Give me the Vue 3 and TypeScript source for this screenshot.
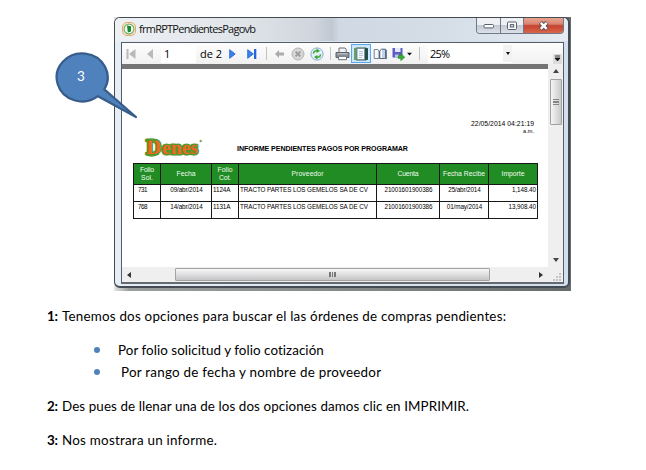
<script setup lang="ts">
import type { Directive } from 'vue'

// Spreads the letters of a label so that it fills the given width in pixels.
const vFit: Directive<HTMLElement, number> = {
  mounted(el, { value }) {
    const count = (el.textContent ?? '').length
    const natural = el.getBoundingClientRect().width
    if (count > 1 && natural > 0) {
      const step = (value - natural) / (count - 1)
      el.style.letterSpacing = `${step}px`
      el.style.marginRight = `${-step}px`
    }
  },
}

interface Cell { text: string; width: number }

const headers: { lines: Cell[] }[] = [
  { lines: [{ text: 'Folio', width: 14 }, { text: 'Sol.', width: 12 }] },
  { lines: [{ text: 'Fecha', width: 19 }] },
  { lines: [{ text: 'Folio', width: 15 }, { text: 'Cot.', width: 12 }] },
  { lines: [{ text: 'Proveedor', width: 32 }] },
  { lines: [{ text: 'Cuenta', width: 21 }] },
  { lines: [{ text: 'Fecha Recibe', width: 42 }] },
  { lines: [{ text: 'Importe', width: 23 }] },
]

const rows: Cell[][] = [
  [
    { text: '731', width: 9.5 },
    { text: '09/abr/2014', width: 32.5 },
    { text: '1124A', width: 17.5 },
    { text: 'TRACTO PARTES LOS GEMELOS SA DE CV', width: 128 },
    { text: '21001601900386', width: 48 },
    { text: '25/abr/2014', width: 32.5 },
    { text: '1,148.40', width: 24 },
  ],
  [
    { text: '768', width: 9.5 },
    { text: '14/abr/2014', width: 32.5 },
    { text: '1131A', width: 17.5 },
    { text: 'TRACTO PARTES LOS GEMELOS SA DE CV', width: 128 },
    { text: '21001601900386', width: 48 },
    { text: '01/may/2014', width: 35.5 },
    { text: '13,908.40', width: 27.5 },
  ],
]
</script>

<template>
  <main class="page">
    <section class="shot">
      <div class="window">
        <header class="title">
          <svg class="app-icon" width="14" height="14" viewBox="0 0 14 14">
            <rect x=".5" y=".5" width="13" height="13" rx="4.5" fill="#fbe6cf" stroke="#e6a873" />
            <circle cx="7" cy="7" r="4.9" fill="#fff" stroke="#6fb862" stroke-width="1.2" />
            <path d="M5 3.6 9 4.2v5.4l-3.2 1z" fill="#168b29" />
          </svg>
          <span class="caption"><span v-fit="117">frmRPTPendientesPagovb</span></span>
          <div class="controls">
            <span class="control min">
              <svg width="12" height="8" viewBox="0 0 12 8"><rect x="1" y="2.5" width="9.5" height="3.4" rx="1" fill="#fff" stroke="#59616d" /></svg>
            </span>
            <span class="control max">
              <svg width="12" height="10" viewBox="0 0 12 10"><rect x="1.5" y="1" width="9" height="7.5" rx="1" fill="#fff" stroke="#59616d" /><rect x="4.3" y="3.6" width="3.4" height="2.4" fill="#d9dde4" stroke="#59616d" /></svg>
            </span>
            <span class="control close">
              <svg width="12" height="10" viewBox="0 0 12 10"><path d="M2.5 1.5 9 8.2M9 1.5 2.5 8.2" stroke="#59494f" stroke-width="4.2" /><path d="M2.8 1.8 8.7 7.9M8.7 1.8 2.8 7.9" stroke="#fff" stroke-width="2.4" /></svg>
            </span>
          </div>
        </header>

        <div class="client">
          <div class="toolbar">
            <span class="tool first"><svg width="10" height="10" viewBox="0 0 10 10"><path d="M.5 0h2v10h-2zM9.5 0v10L3 5z" fill="#b7b9bb" /></svg></span>
            <span class="tool prev"><svg width="6" height="10" viewBox="0 0 6 10"><path d="M6 0v10L0 5z" fill="#b7b9bb" /></svg></span>
            <span class="page-box">1</span>
            <span class="page-total"><span v-fit="22">de 2</span></span>
            <span class="tool next"><svg width="7" height="10" viewBox="0 0 7 10"><path d="M.7.7v8.6L6.2 5z" fill="#3982ee" stroke="#1c5dce" stroke-width=".8" /></svg></span>
            <span class="tool last"><svg width="10" height="10" viewBox="0 0 10 10"><path d="M.7.7v8.6L6.4 5z" fill="#3982ee" stroke="#1c5dce" stroke-width=".8" /><path d="M7 0h2.3v10H7z" fill="#2367d5" /></svg></span>
            <span class="sep wide"></span>
            <span class="tool back"><svg width="9" height="8" viewBox="0 0 9 8"><path d="M0 4 4 0v2.6h5v3H4V8z" fill="#a9abad" /></svg></span>
            <span class="tool stop"><svg width="14" height="14" viewBox="0 0 14 14"><circle cx="7" cy="7" r="6" fill="#d6d6d6" stroke="#b4b4b4" /><path d="m4.6 4.6 4.8 4.8m0-4.8L4.6 9.4" stroke="#999" stroke-width="1.6" /></svg></span>
            <span class="tool refresh"><svg width="14" height="14" viewBox="0 0 14 14"><circle cx="7" cy="7" r="6.1" fill="#e6f0f8" stroke="#82aed3" /><path d="M3.4 6.6C3.6 4.6 5 3.6 7 3.7M10.6 7.4c-.2 2-1.6 3-3.6 2.9" fill="none" stroke="#45ad3f" stroke-width="1.5" /><path d="M6.6 1.6 10 3.9 6.6 6zM7.4 8 4 10.1l3.4 2.3z" fill="#32a62f" /></svg></span>
            <span class="sep"></span>
            <span class="tool print"><svg width="15" height="14" viewBox="0 0 15 14"><path d="M4 1h6l1.2 1.3V6H4z" fill="#eef2f7" stroke="#6c7178" /><path d="M1 5.5h13v5H1z" fill="#8d9298" stroke="#5c626a" /><path d="M2.5 6.8h10" stroke="#c6cbd1" /><path d="M3.5 9.3h8v3.4h-8z" fill="#fff" stroke="#6a7078" /></svg></span>
            <span class="tool layout"><svg width="16" height="14" viewBox="0 0 16 14"><path d="M1 1.5 4 .5h8l3 1v11l-3 1H4l-3-1z" fill="#326b35" /><path d="M1 1.5 3.5.6v12.7L1 12.5z" fill="#65a46b" /><path d="M12 .5 15 1.5v11l-3 1z" fill="#264e46" /><path d="M4 1.5h7.5v11H4z" fill="#f7fbff" stroke="#7e919f" /><path d="M6 4.5h4M6 6.5h4M6 8.5h4M6 10.5h3" stroke="#adc4dc" /></svg></span>
            <span class="tool setup"><svg width="15" height="12" viewBox="0 0 15 12"><path d="M1.2 1.5h3.6L6 3v7.5H1.2z" fill="#f6f8fa" stroke="#7b828c" /><path d="M6.5 10.5V3l2-1.8h4v9.3z" fill="#c3d2e6" stroke="#56667a" /><path d="M8.5 2v8" stroke="#fff" /><path d="M13.4 1.8v9.3" fill="none" stroke="#62738a" /></svg></span>
            <span class="tool save"><svg width="20" height="14" viewBox="0 0 20 14"><path d="M.5 1h10v9.5H.5z" fill="#5e5bc4" /><path d="M3 1h5.5v4H3z" fill="#e3e8fa" /><path d="M3 7.5h4v3H3z" fill="#c3c5ec" /><path d="M6.2 8.6h2.6V6.4l4 3.8-4 3.6v-2.4H6.200z" fill="#39ad34" stroke="#208528" stroke-width=".5" /><path d="M15 5.8h5l-2.5 2.7z" fill="#111" /></svg></span>
            <span class="sep zoom-sep"></span>
            <span class="zoom-box"><span v-fit="20">25%</span><i></i></span>
            <span class="overflow"><svg width="7" height="7" viewBox="0 0 7 7"><path d="M1 1h5M1 3h5L3.5 6z" fill="#111" stroke="#111" stroke-width=".8" /></svg></span>
          </div>

          <div class="viewer">
            <div class="report">
              <div class="stamp">
                <span v-fit="63">22/05/2014 04:21:19</span>
                <div class="meridiem"><span v-fit="11">a.m.</span></div>
              </div>
              <div class="heading">
                <svg class="logo" width="60" height="22" viewBox="0 0 60 22">
                  <g class="outline"><text x="2" y="17"><tspan class="cap">D</tspan><tspan x="18" textLength="36" lengthAdjust="spacingAndGlyphs">enes</tspan></text></g>
                  <path d="M2 17.500c4 2 9 1.500 13-.6M2 4.500c3-2.600 7-2 10-.6" fill="none" stroke="#51982b" stroke-width="1.500" />
                  <circle cx="56.7" cy="4" r="1.2" fill="#7faa54" />
                </svg>
                <h1><span v-fit="171">INFORME PENDIENTES PAGOS POR PROGRAMAR</span></h1>
              </div>
              <div class="table">
                <div v-for="(head, h) in headers" :key="'h' + h" class="th">
                  <div v-for="line in head.lines" :key="line.text"><span v-fit="line.width">{{ line.text }}</span></div>
                </div>
                <template v-for="(row, r) in rows" :key="r">
                  <div v-for="(cell, c) in row" :key="c" class="td" :class="'col-' + c">
                    <span v-fit="cell.width">{{ cell.text }}</span>
                  </div>
                </template>
              </div>
            </div>
            <div class="vbar">
              <svg class="arrow" width="6" height="4" viewBox="0 0 6 4"><path d="M0 4h6L3 0z" fill="#444" /></svg>
              <div class="vthumb"><i></i><i></i><i></i></div>
              <svg class="arrow down" width="6" height="4" viewBox="0 0 6 4"><path d="M0 0h6L3 4z" fill="#444" /></svg>
            </div>
          </div>

          <div class="hbar">
            <svg class="left" width="4" height="6" viewBox="0 0 4 6"><path d="M4 0v6L0 3z" fill="#333" /></svg>
            <div class="hthumb"><i></i><i></i><i></i></div>
            <svg class="right" width="4" height="6" viewBox="0 0 4 6"><path d="M0 0v6l4-3z" fill="#333" /></svg>
            <svg class="grip" width="8" height="8" viewBox="0 0 8 8"><path d="M6 0h2v2H6zM3 3h2v2H3zM6 3h2v2H6zM0 6h2v2H0zM3 6h2v2H3zM6 6h2v2H6z" fill="#c4c4c4" /></svg>
          </div>
        </div>
      </div>

      <div class="callout">
        <svg width="88" height="70" viewBox="0 0 88 70">
          <path d="M54.3 38.300 86 66 48 45.200A25.500 24 0 1 1 54.300 38.300Z" fill="#4f81bd" stroke="#385d8a" stroke-width="2.2" stroke-linejoin="round" />
        </svg>
        <span>3</span>
      </div>
    </section>

    <section class="notes">
      <p><b v-fit="11">1:</b><span v-fit="444">Tenemos dos opciones para buscar el las órdenes de compras pendientes:</span></p>
      <ul>
        <li><span v-fit="206">Por folio solicitud y folio cotización</span></li>
        <li class="shifted"><span v-fit="260">Por rango de fecha y nombre de proveedor</span></li>
      </ul>
      <p><b v-fit="11">2:</b><span v-fit="407">Des pues de llenar una de los dos opciones damos clic en IMPRIMIR.</span></p>
      <p><b v-fit="11">3:</b><span v-fit="155">Nos mostrara un informe.</span></p>
    </section>
  </main>
</template>

<style>
body { background: #fff; }
</style>

<style scoped>
* { box-sizing: border-box; }
.page { width: 646px; height: 470px; overflow: hidden; background: #fff; padding-top: 17px; color: #000; }
.page span, .page b { white-space: nowrap; }
.shot { position: relative; width: 457px; height: 274px; margin-left: 114px; background: linear-gradient(90deg, #e4e5e6, #9a9e9f 15px, #808586 60%, #666b6b); }
.window { width: 456px; height: 271px; border: 1px solid #444b52; border-right-width: 2px; border-bottom-width: 2px; border-radius: 6px; background: linear-gradient(90deg, #e7edf4, #d7e0eb 70%, #d3dfec); padding: 0 5px 6px 6px; }
.title { display: flex; height: 23px; margin: 0 -5px 0 -6px; padding: 0 4px 0 7px; border-radius: 5px 5px 0 0; background: linear-gradient(90deg, #eef1f4, #dfe4e9 130px, #d0d5dd 200px, #c0c8d3 217px, #d0d8e3 224px, #d5dde7 330px, #e4ebf2); }
.app-icon { margin-top: 4px; }
.caption { margin: 2px 0 0 3px; font: 11px/18px "Open Sans", sans-serif; color: #111; }
.controls { display: flex; margin-left: auto; height: 16px; border: 1px solid #707884; border-top: 0; border-radius: 0 0 4px 4px; overflow: hidden; }
.control { display: flex; align-items: center; justify-content: center; background: linear-gradient(#eef0f4 45%, #c3c9d3 50%, #dce1e9); border-right: 1px solid #707884; }
.min { width: 24px; }
.max { width: 23px; }
.close { width: 39px; border: 0; background: linear-gradient(#e9a48f 0, #d88571 40%, #c4432f 52%, #d9664a); }
.client { width: 443px; height: 242px; margin-top: 1px; border: 1px solid #555d67; border-bottom: 2px solid #656a72; background: #fff; }
.toolbar { display: flex; align-items: center; height: 21px; background: linear-gradient(#fdfdfd, #f1f1f1); }
.tool { display: flex; align-items: center; justify-content: center; height: 19px; flex: none; }
.first { width: 17px; }
.prev { width: 22px; }
.page-box { width: 35px; height: 18px; padding-left: 3px; background: #fff; font: 11px/17px "Open Sans", sans-serif; }
.page-total { width: 28px; padding-left: 4px; font: 11px/17px "Open Sans", sans-serif; }
.next { width: 17px; }
.last { width: 21px; }
.sep { width: 1px; height: 13px; margin: 0 3px; background: #c2c2c2; }
.sep.wide { margin: 0 4px; }
.back { width: 17px; }
.stop { width: 19px; }
.refresh { width: 20px; }
.print { width: 17px; }
.layout { width: 20px; border: 1px solid #55a9f2; background: #cfe6fc; }
.setup { width: 19px; }
.save { width: 23px; }
.zoom-sep { margin: 0 8px 0 6px; }
.zoom-box { display: flex; align-items: center; justify-content: space-between; width: 84px; height: 18px; padding-left: 2px; background: #fff; font: 11px/17px "Open Sans", sans-serif; }
.zoom-box i { width: 9px; height: 17px; background: #f2f2f2; display: flex; align-items: center; justify-content: center; }
.zoom-box i::after { content: ""; border: 2.5px solid transparent; border-top: 3px solid #111; border-bottom: 0; }
.overflow { display: flex; align-items: center; justify-content: center; width: 9px; height: 10px; margin: 10px 1px 0 auto; background: #dcdcdc; }
.viewer { display: flex; height: 203px; }
.report { width: 426px; border-top: 5px solid #747474; padding-left: 11px; font-family: "Liberation Sans", sans-serif; }
.stamp { width: 401px; height: 70px; padding-top: 50px; text-align: right; font-size: 6.8px; line-height: 9px; }
.meridiem { font-size: 5.5px; line-height: 6px; }
.heading { display: flex; height: 24px; }
.logo { margin-left: 11px; margin-top: -2px; overflow: visible; }
.logo text { font: bold 19px "Liberation Serif", serif; fill: #f26522; }
.logo .cap { font-size: 21px; }
.logo .outline { stroke: #52982d; stroke-width: 3px; paint-order: stroke; stroke-linejoin: round; }
h1 { margin: 5px 0 0 33px; font: bold 7.1px/10px "Liberation Sans", sans-serif; }
.table { display: grid; grid-template-columns: 26px 50px 26px 137px 62px 48px 48px; grid-template-rows: 20px 16px 16px; gap: 1px; width: 405px; padding: 1px; background: #171717; }
.th { display: flex; flex-direction: column; justify-content: center; text-align: center; background: #218c24; color: #f0faee; font-size: 6.8px; line-height: 8px; padding-bottom: 1px; }
.td { background: #fff; padding: 1px 2px 0 3px; font-size: 6.3px; line-height: 8px; text-align: center; }
.col-0 { text-align: left; padding-left: 4px; }
.col-2, .col-3 { text-align: left; padding-left: 1px; }
.col-6 { text-align: right; padding-right: 1px; }
.vbar { display: flex; flex-direction: column; align-items: center; width: 15px; padding: 5px 1px 5px; background: #efefef; }
.vthumb { display: flex; flex-direction: column; align-items: center; justify-content: center; gap: 1px; width: 12px; height: 46px; margin-top: 6px; border: 1px solid #a1a1a1; border-radius: 1px; background: linear-gradient(90deg, #f5f5f5, #dedfe0 50%, #c8c9cc); }
.vthumb i { width: 6px; height: 1.5px; background: #858585; }
.down { margin-top: auto; }
.hbar { display: flex; align-items: center; height: 15px; padding: 0 2px 0 5px; background: #efefef; }
.hthumb { display: flex; align-items: center; justify-content: center; gap: 1px; width: 315px; height: 13px; margin-left: 44px; border: 1px solid #a3a3a3; border-radius: 1px; background: linear-gradient(#f7f7f7, #e1e1e2 45%, #c5c5c8); }
.hthumb i { width: 1.5px; height: 5px; background: #777; }
.right { margin-left: 49px; }
.grip { margin: 4px 0 0 auto; }
.callout { position: absolute; left: -64px; top: 34px; width: 88px; height: 70px; }
.callout span { position: absolute; left: 27px; top: 17px; color: #fff; font: 13.5px/16px Lato, sans-serif; }
.notes { padding: 17px 0 0 47px; font: 13.4px/16px Lato, sans-serif; }
.notes p { display: flex; gap: 4px; margin: 0; height: 16px; }
.notes ul { list-style: none; margin: 18px 0 18px; padding: 0 0 0 47px; }
.notes li { display: flex; align-items: center; height: 16px; gap: 18px; }
.notes li::before { content: ""; width: 6px; height: 6px; border-radius: 50%; background: #4f81bd; }
.notes li + li { margin-top: 6px; gap: 21px; }
.notes p + p { margin-top: 18px; }
</style>
